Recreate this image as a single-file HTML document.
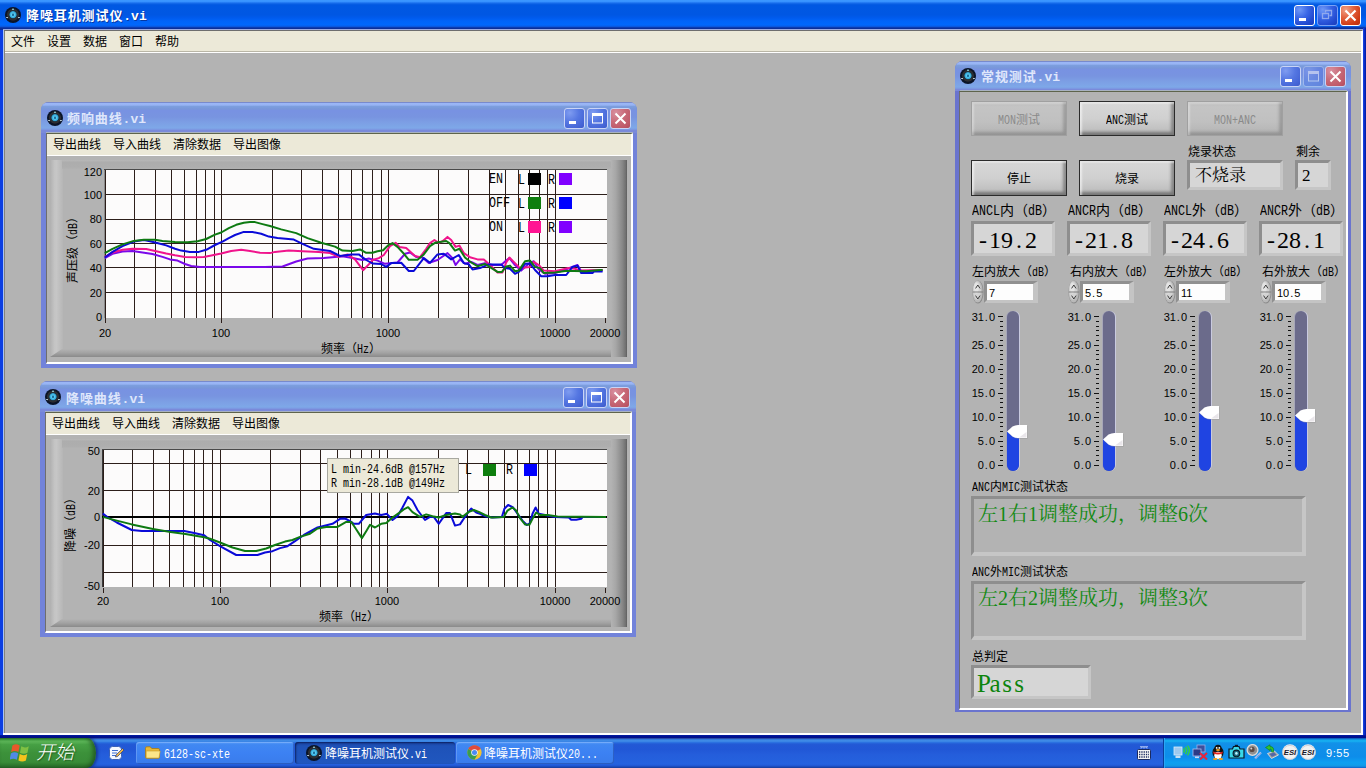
<!DOCTYPE html>
<html lang="zh-CN"><head><meta charset="utf-8"><title>降噪耳机测试仪.vi</title>
<style>
html,body{margin:0;padding:0}
body{width:1366px;height:768px;overflow:hidden;position:relative;background:#b3b3b3;color:#000;
 font:12px/12px "Liberation Sans","Noto Sans CJK SC",sans-serif}
.a,.plot,body div,body span.p{position:absolute}
.t{white-space:nowrap;line-height:12px;height:12px}
.m{display:inline-block;position:static;font-family:"Liberation Mono",monospace;font-size:1em;transform:scaleX(.8333);transform-origin:0 50%;white-space:pre;margin-right:calc(var(--n)*-.1em);line-height:1em}
.f14{font-size:14px;line-height:14px;height:14px}
.f13{font-size:13px;line-height:13px;height:13px}
.n{font:11px/12px "Liberation Sans",sans-serif;white-space:nowrap}
/* main window */
#mt{left:0;top:0;width:1366px;height:30px;background:linear-gradient(to bottom,#3c98ff 0,#3792ff 1.5px,#1a70ee 3px,#0a60e4 4px,#0058e2 5px,#0057e3 15px,#005bee 18px,#0064f8 21px,#0068fc 25px,#0a58de 26.5px,#0b3cb0 27.5px,#0a2e98 28.5px,#0a2e98 30px)}
.ttl{color:#fff;font:bold 13px/14px "Liberation Mono","Noto Sans CJK SC",sans-serif;letter-spacing:.9px;white-space:nowrap;text-shadow:1px 1px 0 rgba(10,20,90,.55)}
.ttl i{font-style:normal;letter-spacing:0}
.ico{width:16px;height:16px;border-radius:50%;background:radial-gradient(circle at 50% 14%,#8cc4cc 0,#8cc4cc .5px,transparent 1.1px),radial-gradient(circle at 13% 66%,#b4c8d0 0,#b4c8d0 .5px,transparent 1.1px),radial-gradient(circle at 87% 66%,#b4c8d0 0,#b4c8d0 .5px,transparent 1.1px),radial-gradient(circle at 50% 48%,#1c6e9c 0,#1c6e9c .9px,#58ccf0 1.5px,#2ea4d8 3.1px,#22323c 3.9px,#302c2e 5.5px,#0a1428 6.3px,#0a1428 100%)}
.cb{width:19px;height:19px;border:1px solid #fff;border-radius:3px;background:radial-gradient(circle at 25% 20%,#6f98f6 0,#3a66e6 40%,#2149cf 75%,#1a3cb8 100%)}
.cb.x{background:radial-gradient(circle at 25% 20%,#f0a085 0,#e2603c 40%,#cf3a14 75%,#b82e10 100%)}
.cb svg{position:absolute;left:0;top:0}
/* inactive child windows */
.w{background:#7283da;border-radius:8px 8px 0 0}
.wt{left:0;top:0;right:0;height:31px;border-radius:8px 8px 0 0;background:linear-gradient(to bottom,#7484c4 0,#7c90d4 1px,#9ab6f6 1.5px,#98b4f4 3px,#7c9ede 4.5px,#7896da 7px,#7892e2 8.5px,#7894e0 15px,#7c9ee4 20px,#7ea8e8 26px,#7c98e2 27.5px,#7a8ada 28.5px,#7a8ada 100%)}
.wt:after{content:"";position:absolute;left:5px;right:4px;bottom:0;height:1px;background:#a8b2c0}
.w .ttl{color:#dfe6fb;text-shadow:none}
.w .cb{border-color:#c9d4f6;background:radial-gradient(circle at 25% 20%,#7f9cf0 0,#5577e2 45%,#4565d6 80%,#3d5bc8 100%)}
.w .cb.x{background:radial-gradient(circle at 25% 20%,#d890a0 0,#c86a78 45%,#be5868 80%,#b04c5c 100%)}
.w .cb.d{opacity:.45}
.wc{background:#b3b3b3;border-style:solid;border-color:#5e644c #fff #fff #6e6e6e;border-width:1px 2px 2px 1px}
.mb{left:0;top:0;right:0;height:21px;background:#ece9d8;border-bottom:1px solid #fff}
.mb span{position:absolute;top:5px;white-space:nowrap}
/* graph panel bevel */
.gp{background:#b3b3b3}
.gp:before{content:"";position:absolute;left:0;top:0;bottom:0;width:13px;background:linear-gradient(to right,#b0b0b0,#c4c4c4 35%,#c6c6c6 50%,#b6b6b6)}
.gp:after{content:"";position:absolute;right:0;top:0;bottom:0;width:16px;background:linear-gradient(to right,#b3b3b3,#a6a6a6 30%,#888 70%,#6e6e6e 94%,#5a5a5a)}
.gpb{left:0;right:0;bottom:0;height:8px;background:linear-gradient(to bottom,#b3b3b3,#a2a2a2 50%,#8a8a8a);clip-path:polygon(12px 0,calc(100% - 15px) 0,100% 100%,0 100%)}
.gpt{left:12px;right:16px;top:0;height:9px;background:linear-gradient(to bottom,#b8b8b8,#adadad 25%,#aeaeae 80%,#b2b2b2)}
.yl{width:40px;text-align:right}
.xl{width:60px;text-align:center}
.tk{width:1px;height:5px;background:#2c1e1a}
.sw{width:13px;height:12px}
/* right panel controls */
.btn{border:1px solid #2b2b2b;box-sizing:border-box;background:linear-gradient(to bottom,#c9c9c9 0,#d6d6d6 12%,#d0d0d0 50%,#c0c0c0 85%,#a8a8a8 100%);box-shadow:inset 2px 2px 2px rgba(255,255,255,.55),inset -3px -3px 3px rgba(70,70,70,.5);text-align:center;line-height:34px}
.btn.dis{border-color:#a0a0a0;color:#8a8a8a;background:linear-gradient(to bottom,#bcbcbc 0,#c4c4c4 15%,#c0c0c0 60%,#b3b3b3 100%);box-shadow:inset 2px 2px 2px rgba(255,255,255,.3),inset -3px -3px 3px rgba(90,90,90,.35)}
.ind{box-sizing:border-box;border-style:solid;border-width:3px;border-color:#8e8e8e #c6c6c6 #c6c6c6 #8e8e8e;background:#d6d6d6}
.ind.g{background:#b3b3b3;border-width:3px 4px 4px 3px}
.big{font:24px/24px "Liberation Serif","Noto Serif CJK SC",serif;white-space:nowrap}
.big b{display:inline-block;width:12px;text-align:center;font-weight:normal}
.gt{font:20px/20px "Liberation Serif","Noto Serif CJK SC",serif;color:#138a13;white-space:nowrap}
.gt b{display:inline-block;width:10px;text-align:center;font-weight:normal}
.sp{width:12px;height:24px}
.inp{box-sizing:border-box;border-style:solid;border-width:3px 5px 3px 3px;border-color:#909090 #c4c4c4 #c4c4c4 #909090;background:#fdfdfd}
.trk{width:12px;border-radius:6px;background:#6b6b8b;box-shadow:1px 0 0 #c9cadf,-1px 0 0 #a6a6b8}
.trk i{position:absolute;left:0;right:0;bottom:0;background:#1f44e2;border-radius:0 0 6px 6px}
.th{width:20px;height:13px;border-radius:7px 3px 3px 7px/6.5px 3px 3px 6.5px;background:linear-gradient(to bottom,#ffffff 0,#fbfbfb 55%,#d8d8d8 100%);box-shadow:0 1px 1px rgba(60,60,60,.35)}
.sl{width:26px;text-align:right}
.n i{display:inline-block;position:static;width:5px;text-align:center;font-style:normal}
/* taskbar */
#tb{left:0;top:738px;width:1366px;height:30px;background:linear-gradient(to bottom,#1f2f86 0,#3165c4 3%,#3682e5 6%,#4490e6 10%,#3883e5 12%,#2b71e0 15%,#2663da 18%,#235bd6 20%,#2258d5 23%,#2157d6 38%,#245ddb 54%,#2562df 86%,#245fdc 89%,#2158d4 92%,#1d4ec0 95%,#1941a5 98%)}
#st{left:0;top:0;width:96px;height:30px;border-radius:0 9px 9px 0/0 15px 15px 0;background:linear-gradient(to bottom,#2f7d2f 0,#4fae4c 7%,#5cb658 12%,#46a044 22%,#3c913a 50%,#398c38 80%,#2f7a2f 92%,#286a28 100%);box-shadow:inset -3px 0 4px rgba(20,60,20,.6),2px 0 3px rgba(10,20,80,.5)}
.tbb{top:4px;height:22px;border-radius:3px;background:linear-gradient(to bottom,#5a9cfa 0,#4088f2 12%,#3c81f3 50%,#3a7ceb 100%);box-shadow:inset 1px 1px 0 rgba(255,255,255,.18),inset -1px -1px 0 rgba(0,0,60,.25);color:#fff}
.tbb.on{background:linear-gradient(to bottom,#1a46a6 0,#1e52b8 20%,#2057bf 100%);box-shadow:inset 1px 1px 2px rgba(0,0,40,.6)}
.tbb .t{color:#fff}
#tray{right:0;top:0;width:203px;height:30px;background:linear-gradient(to bottom,#0c59b9 1%,#139ee9 6%,#18b5f2 10%,#139beb 14%,#1290e8 19%,#0d8dea 63%,#0d9ff1 81%,#0f9eed 88%,#119be9 91%,#1392e2 94%,#137ed7 97%,#095bc9 100%);box-shadow:inset 1px 0 0 #0a3f9a,inset 2px 0 0 #2aa5f5}
</style></head><body>
<div id="mt"></div>
<div class="ico" style="left:5px;top:7px"></div>
<div class="ttl" style="left:26px;top:10px">降噪耳机测试仪<i>.vi</i></div>
<div class="cb" style="left:1294px;top:5px"><svg width="19" height="19"><rect x="4" y="12" width="7" height="3" fill="#fff"/></svg></div>
<div class="cb" style="left:1317px;top:5px;border-color:#7aa2f6"><svg width="19" height="19" fill="none" stroke="#8fa8ee" stroke-width="1.3"><path d="M7.5 6.5V4.5H13.5V9.5H11.5"/><rect x="4.5" y="7.5" width="6" height="5"/></svg></div>
<div class="cb x" style="left:1340px;top:5px"><svg width="19" height="19" stroke="#fff" stroke-width="2.2" stroke-linecap="butt"><path d="M4.5 4.5L14.5 14.5M14.5 4.5L4.5 14.5"/></svg></div>
<div style="left:0;top:30px;width:3px;height:708px;background:#0c3ee2"></div>
<div style="left:3px;top:29px;width:1px;height:706px;background:#a9c4f6"></div>
<div style="left:4px;top:30px;width:1px;height:703px;background:#85837a"></div>
<div style="left:3px;top:29px;width:1360px;height:1px;background:#9aaae2"></div>
<div style="left:4px;top:30px;width:1358px;height:1px;background:#6e6e6e"></div>
<div style="left:1363px;top:28px;width:3px;height:710px;background:linear-gradient(to right,#1a48e8,#0a2cc8 50%,#001a9c)"></div>
<div style="left:1361px;top:31px;width:2px;height:704px;background:#fff"></div>
<div style="left:3px;top:733px;width:1360px;height:2px;background:#fff"></div>
<div style="left:0;top:735px;width:1366px;height:3px;background:linear-gradient(to bottom,#0420a8,#001090 40%,#000e8c)"></div>
<div style="left:5px;top:31px;width:1356px;height:20px;background:#ece9d8"></div>
<div style="left:5px;top:51px;width:1356px;height:1px;background:#b9b6a6"></div>
<div style="left:5px;top:52px;width:1356px;height:1px;background:#fff"></div>
<div class="t" style="left:11px;top:36px">文件</div>
<div class="t" style="left:47px;top:36px">设置</div>
<div class="t" style="left:83px;top:36px">数据</div>
<div class="t" style="left:119px;top:36px">窗口</div>
<div class="t" style="left:155px;top:36px">帮助</div>

<div class="w" style="left:41px;top:102px;width:596px;height:266px"><div class="wt"></div>
<div class="ico" style="left:6px;top:8px"></div>
<div class="ttl" style="left:26px;top:11px">频响曲线<i>.vi</i></div>
<div class="cb" style="left:523px;top:6px"><svg width="19" height="19"><rect x="4" y="12" width="7" height="3" fill="#fff"/></svg></div>
<div class="cb" style="left:546px;top:6px"><svg width="19" height="19" fill="none" stroke="#fff"><rect x="4.5" y="5.5" width="10" height="8.5" stroke-width="1"/><rect x="4" y="4" width="11" height="3" fill="#fff" stroke="none"/></svg></div>
<div class="cb x" style="left:569px;top:6px"><svg width="19" height="19" stroke="#fff" stroke-width="2"><path d="M4.5 4.5L14.5 14.5M14.5 4.5L4.5 14.5"/></svg></div>
<div class="wc" style="left:5px;top:31px;width:584px;height:228px"><div class="mb"><span style="left:6px">导出曲线</span><span style="left:66px">导入曲线</span><span style="left:126px">清除数据</span><span style="left:186px">导出图像</span></div>
<div class="gp" style="left:3px;top:26px;width:577px;height:197px"><div class="gpt"></div><div class="gpb"></div></div></div></div>
<svg class="plot" style="left:104px;top:169px" width="503" height="149" viewBox="0 0 503 149">
<rect width="503" height="149" fill="#fcfbfb"/>
<path d="M1.5 0V149M30.5 0V149M51.5 0V149M67.5 0V149M80.5 0V149M92.5 0V149M101.5 0V149M110.5 0V149M117.5 0V149M168.5 0V149M197.5 0V149M218.5 0V149M234.5 0V149M247.5 0V149M258.5 0V149M268.5 0V149M277.5 0V149M284.5 0V149M334.5 0V149M364.5 0V149M385.5 0V149M401.5 0V149M414.5 0V149M425.5 0V149M435.5 0V149M443.5 0V149M451.5 0V149M0 123.5H503M0 98.5H503M0 74.5H503M0 50.5H503M0 25.5H503" stroke="#2c1e1a" stroke-width="1" fill="none" shape-rendering="crispEdges"/>
<path d="M.5 149V.5" stroke="#8a8a8a" fill="none" shape-rendering="crispEdges"/><path d="M0 .5H503" stroke="#4a4a4a" fill="none" shape-rendering="crispEdges"/>
<path d="M0.8 89.1 L8.5 84.8 L18.5 82.6 L28.5 82.0 L38.5 83.5 L48.5 85.0 L58.5 87.9 L66.0 90.4 L73.5 91.6 L81.0 95.0 L87.2 97.0 L96.0 97.9 L128.5 97.9 L161.0 97.9 L178.5 97.5 L192.2 92.5 L203.5 89.5 L219.8 89.1 L231.0 87.9 L238.5 87.2 L248.5 89.1 L258.5 91.0 L264.8 89.5 L273.5 91.6 L281.0 94.8 L293.5 93.5 L301.0 84.8 L306.0 83.5 L312.2 87.9 L318.5 88.5 L324.8 94.1 L326.0 93.5 L333.5 91.0 L343.5 84.1 L348.5 89.1 L351.6 96.0 L356.0 90.4 L361.0 94.8 L367.2 92.9 L373.5 96.0 L381.0 94.1 L388.5 96.0 L397.2 96.0 L402.2 91.6 L405.4 89.1 L411.0 96.0 L417.2 101.6 L424.8 94.8 L429.8 92.2 L434.8 100.4 L441.0 104.8 L451.0 104.1 L463.5 99.8 L473.5 96.0 L477.2 102.2 L496.0 101.6 L498.6 101.6" stroke="#7a08ea" stroke-width="2" fill="none" stroke-linejoin="round"/>
<path d="M0.8 87.9 L8.5 83.5 L18.5 80.8 L28.5 79.8 L42.2 80.0 L52.2 82.2 L62.2 84.5 L71.0 86.2 L81.0 87.9 L91.0 88.2 L99.8 88.1 L108.5 86.2 L117.2 84.5 L127.2 82.0 L137.2 80.8 L146.0 82.0 L156.0 83.8 L166.0 84.1 L171.0 82.9 L184.8 81.6 L198.5 82.2 L214.8 82.9 L226.0 84.1 L234.8 87.9 L243.5 85.4 L251.0 90.4 L259.1 101.2 L266.0 94.1 L268.5 91.0 L274.8 89.1 L279.8 86.0 L286.0 77.2 L291.6 73.8 L295.4 77.9 L302.2 79.1 L311.0 87.0 L316.0 88.2 L322.2 79.8 L326.0 74.1 L330.4 71.0 L334.8 73.8 L338.5 72.2 L343.5 67.9 L347.2 71.0 L351.6 77.9 L355.4 76.6 L359.8 84.1 L366.0 88.2 L373.5 90.4 L379.8 90.4 L386.0 96.0 L393.5 103.5 L398.5 103.5 L402.2 93.5 L405.4 88.5 L411.0 94.1 L416.0 99.1 L421.0 98.5 L426.0 97.9 L429.8 92.9 L434.8 96.0 L439.8 101.6 L451.0 102.2 L463.5 99.1 L471.0 99.8 L476.0 101.6 L496.0 101.0 L498.6 101.0" stroke="#f0148c" stroke-width="2" fill="none" stroke-linejoin="round"/>
<path d="M0.8 88.5 L8.5 82.9 L18.5 77.2 L29.8 72.5 L39.8 71.0 L46.0 72.2 L52.2 73.8 L62.2 76.4 L71.0 79.8 L77.2 81.6 L86.0 82.9 L94.8 82.9 L102.2 80.8 L111.0 76.0 L118.5 72.6 L124.8 69.1 L131.0 66.0 L139.8 62.9 L148.5 62.9 L157.2 64.8 L164.8 67.6 L173.5 69.1 L189.8 70.6 L198.5 74.8 L209.8 79.8 L226.0 82.0 L236.0 87.0 L247.2 85.4 L254.8 85.4 L262.2 91.0 L268.5 94.5 L277.2 95.0 L282.2 97.9 L287.2 94.1 L297.2 93.8 L304.8 102.0 L309.8 102.0 L319.8 89.1 L326.0 93.8 L333.5 85.4 L339.8 84.8 L347.2 90.4 L354.8 86.0 L359.8 94.1 L364.8 95.4 L368.5 100.4 L376.0 99.1 L384.8 95.4 L397.2 95.4 L401.0 99.1 L406.0 99.8 L411.0 104.8 L414.8 102.9 L421.0 94.8 L426.0 94.5 L431.0 101.0 L437.2 107.2 L443.5 107.2 L451.0 106.0 L462.2 106.0 L468.5 97.9 L473.5 96.6 L477.2 104.1 L488.5 104.1 L490.0 102.6 L498.6 102.6" stroke="#0a0ad8" stroke-width="2" fill="none" stroke-linejoin="round"/>
<path d="M0.8 84.1 L8.5 79.8 L18.5 75.4 L29.8 71.9 L39.8 70.8 L51.0 70.8 L58.5 71.9 L71.0 73.1 L83.5 73.2 L93.5 72.2 L102.2 70.0 L111.0 65.6 L117.2 63.5 L124.8 59.1 L132.2 55.8 L139.8 53.8 L146.0 52.9 L151.0 53.1 L158.5 55.1 L166.0 57.0 L177.2 60.4 L192.2 64.1 L203.5 69.1 L217.2 73.8 L231.0 77.6 L238.5 81.6 L248.5 82.0 L256.0 80.4 L262.2 83.8 L268.5 83.8 L273.5 82.2 L279.1 81.2 L284.8 75.8 L288.5 74.1 L293.5 77.9 L299.9 84.8 L304.8 90.8 L313.5 90.8 L319.8 85.4 L326.0 77.2 L331.0 73.8 L342.2 72.0 L345.4 74.1 L351.0 81.6 L355.4 79.8 L361.0 88.5 L367.2 93.5 L373.5 97.2 L381.0 95.0 L387.2 98.8 L393.5 102.9 L397.9 102.9 L402.2 97.5 L406.0 96.6 L411.0 102.2 L414.8 101.6 L421.0 92.2 L426.0 91.6 L431.0 97.9 L436.0 99.1 L439.8 104.1 L451.0 103.5 L461.0 102.0 L469.8 102.0 L482.2 102.2 L496.0 101.0 L498.6 101.0" stroke="#0e7a12" stroke-width="2" fill="none" stroke-linejoin="round"/>

</svg>
<div class="n yl" style="left:62px;top:166px">120</div>
<div class="n yl" style="left:62px;top:189px">100</div>
<div class="n yl" style="left:62px;top:213px">80</div>
<div class="n yl" style="left:62px;top:238px">60</div>
<div class="n yl" style="left:62px;top:262px">40</div>
<div class="n yl" style="left:62px;top:287px">20</div>
<div class="n yl" style="left:62px;top:311px">0</div>
<div class="tk" style="left:105px;top:318px"></div><div class="tk" style="left:221px;top:318px"></div><div class="tk" style="left:388px;top:318px"></div><div class="tk" style="left:555px;top:318px"></div><div class="tk" style="left:605px;top:318px"></div>
<div class="n xl" style="left:75px;top:327px">20</div>
<div class="n xl" style="left:191px;top:327px">100</div>
<div class="n xl" style="left:358px;top:327px">1000</div>
<div class="n xl" style="left:525px;top:327px">10000</div>
<div class="n xl" style="left:575px;top:327px">20000</div>
<div class="t" style="left:321px;top:343px">频率（<span class="m" style="--n:2">Hz</span>）</div>
<div class="t" style="left:37px;top:241px;width:72px;text-align:center;transform:rotate(-90deg)">声压级（<span class="m" style="--n:2">dB</span>）</div>
<div class="t f14" style="left:489px;top:171px"><span class="m" style="--n:2">EN</span></div>
<div class="t f14" style="left:489px;top:195px"><span class="m" style="--n:3">OFF</span></div>
<div class="t f14" style="left:489px;top:219px"><span class="m" style="--n:2">ON</span></div>
<div class="t f14" style="left:518px;top:172px"><span class="m" style="--n:1">L</span></div><div class="sw" style="left:528px;top:173px;background:#000"></div><div class="t f14" style="left:548px;top:172px"><span class="m" style="--n:1">R</span></div><div class="sw" style="left:559px;top:173px;background:#8000ff"></div>
<div class="t f14" style="left:518px;top:196px"><span class="m" style="--n:1">L</span></div><div class="sw" style="left:528px;top:197px;background:#0e7e0e"></div><div class="t f14" style="left:548px;top:196px"><span class="m" style="--n:1">R</span></div><div class="sw" style="left:559px;top:197px;background:#0000ff"></div>
<div class="t f14" style="left:518px;top:220px"><span class="m" style="--n:1">L</span></div><div class="sw" style="left:528px;top:221px;background:#ff1493"></div><div class="t f14" style="left:548px;top:220px"><span class="m" style="--n:1">R</span></div><div class="sw" style="left:559px;top:221px;background:#8000ff"></div>

<div class="w" style="left:40px;top:381px;width:596px;height:256px"><div class="wt"></div>
<div class="ico" style="left:5px;top:8px"></div>
<div class="ttl" style="left:26px;top:12px">降噪曲线<i>.vi</i></div>
<div class="cb" style="left:523px;top:6px"><svg width="19" height="19"><rect x="4" y="12" width="7" height="3" fill="#fff"/></svg></div>
<div class="cb" style="left:546px;top:6px"><svg width="19" height="19" fill="none" stroke="#fff"><rect x="4.5" y="5.5" width="10" height="8.5" stroke-width="1"/><rect x="4" y="4" width="11" height="3" fill="#fff" stroke="none"/></svg></div>
<div class="cb x" style="left:569px;top:6px"><svg width="19" height="19" stroke="#fff" stroke-width="2"><path d="M4.5 4.5L14.5 14.5M14.5 4.5L4.5 14.5"/></svg></div>
<div class="wc" style="left:5px;top:31px;width:584px;height:218px"><div class="mb"><span style="left:6px">导出曲线</span><span style="left:66px">导入曲线</span><span style="left:126px">清除数据</span><span style="left:186px">导出图像</span></div>
<div class="gp" style="left:4px;top:26px;width:577px;height:188px"><div class="gpt"></div><div class="gpb"></div></div></div></div>
<svg class="plot" style="left:102px;top:449px" width="505" height="138" viewBox="0 0 505 138">
<rect width="505" height="138" fill="#fcfbfb"/>
<path d="M1.5 0V138M30.5 0V138M51.5 0V138M67.5 0V138M81.5 0V138M92.5 0V138M101.5 0V138M110.5 0V138M118.5 0V138M168.5 0V138M198.5 0V138M218.5 0V138M235.5 0V138M248.5 0V138M259.5 0V138M269.5 0V138M277.5 0V138M285.5 0V138M336.5 0V138M365.5 0V138M386.5 0V138M402.5 0V138M415.5 0V138M427.5 0V138M436.5 0V138M445.5 0V138M453.5 0V138M0 14.5H505M0 41.5H505M0 96.5H505M0 123.5H505" stroke="#2c1e1a" stroke-width="1" fill="none" shape-rendering="crispEdges"/>
<path d="M.5 138V.5" stroke="#3a3a3a" fill="none" shape-rendering="crispEdges"/><path d="M0 .5H505" stroke="#4a4a4a" fill="none" shape-rendering="crispEdges"/>
<rect x="0" y="67.0" width="505" height="2" fill="#000"/>
<path d="M0.8 64.5 L6.0 68.5 L14.8 73.5 L29.8 81.0 L39.8 82.0 L61.0 82.0 L82.2 82.0 L92.2 84.1 L102.2 86.2 L108.0 91.0 L118.0 97.2 L134.2 106.0 L155.5 106.0 L163.0 103.5 L170.5 102.2 L178.0 99.1 L185.5 97.2 L193.0 92.2 L201.8 86.0 L215.5 78.5 L230.5 74.8 L238.0 69.8 L243.0 69.5 L248.0 72.2 L251.8 74.8 L256.8 74.8 L264.2 66.0 L273.0 64.5 L279.2 66.0 L284.9 64.8 L290.5 71.0 L295.5 67.2 L300.5 58.5 L306.1 47.9 L310.5 51.6 L315.5 61.0 L323.0 71.0 L328.0 67.9 L331.8 67.9 L336.8 74.8 L344.2 64.1 L348.0 64.1 L353.0 76.6 L358.0 75.4 L364.2 66.0 L369.2 59.5 L374.2 63.5 L378.0 64.8 L383.0 67.2 L390.5 68.5 L399.9 67.9 L402.4 59.8 L406.1 56.0 L411.1 58.5 L415.5 64.8 L420.5 71.6 L424.9 76.0 L428.0 74.1 L430.5 64.8 L433.6 58.5 L436.8 64.8 L443.0 66.0 L453.0 67.9 L466.8 68.5 L469.2 70.8 L474.2 70.8 L479.2 69.8 L480.5 68.1 L504.0 68.1" stroke="#0a0ad8" stroke-width="2" fill="none" stroke-linejoin="round"/>
<path d="M0.8 67.9 L14.8 71.6 L29.8 75.4 L51.0 80.0 L68.5 82.9 L83.5 85.0 L102.2 88.2 L108.0 89.8 L118.0 93.5 L130.5 98.5 L143.0 102.0 L154.2 102.0 L164.2 99.5 L173.0 96.0 L183.0 92.6 L190.5 91.0 L198.0 87.9 L208.0 84.8 L215.5 79.5 L224.2 77.9 L235.5 77.9 L244.2 72.9 L249.2 72.9 L253.0 78.5 L259.9 89.1 L264.2 82.2 L268.0 75.8 L273.0 78.5 L279.2 74.8 L284.2 74.1 L290.5 68.5 L296.8 64.1 L301.8 60.4 L306.1 58.2 L310.5 63.2 L318.0 67.9 L324.2 65.4 L330.5 67.2 L336.8 68.5 L344.2 66.0 L353.0 64.5 L358.0 65.4 L360.5 67.9 L366.8 62.9 L371.8 61.0 L376.8 62.9 L383.0 66.0 L389.2 68.5 L401.8 67.9 L405.5 61.6 L410.5 58.5 L414.2 61.6 L418.0 69.1 L423.0 75.4 L427.4 75.8 L430.5 69.8 L434.2 63.5 L438.0 66.0 L445.5 66.0 L455.5 67.5 L504.0 68.1" stroke="#0e7a12" stroke-width="2" fill="none" stroke-linejoin="round"/>

</svg>
<div class="n yl" style="left:60px;top:445px">50</div>
<div class="n yl" style="left:60px;top:485px">20</div>
<div class="n yl" style="left:60px;top:511px">0</div>
<div class="n yl" style="left:60px;top:539px">-20</div>
<div class="n yl" style="left:60px;top:580px">-50</div>
<div class="tk" style="left:103px;top:588px"></div><div class="tk" style="left:220px;top:588px"></div><div class="tk" style="left:387px;top:588px"></div><div class="tk" style="left:555px;top:588px"></div><div class="tk" style="left:605px;top:588px"></div>
<div class="n xl" style="left:73px;top:595px">20</div>
<div class="n xl" style="left:190px;top:595px">100</div>
<div class="n xl" style="left:357px;top:595px">1000</div>
<div class="n xl" style="left:525px;top:595px">10000</div>
<div class="n xl" style="left:575px;top:595px">20000</div>
<div class="t" style="left:319px;top:611px">频率（<span class="m" style="--n:2">Hz</span>）</div>
<div class="t" style="left:41px;top:516px;width:60px;text-align:center;transform:rotate(-90deg)">降噪（<span class="m" style="--n:2">dB</span>）</div>
<div style="left:327px;top:458px;width:130px;height:33px;background:#ece9d8;border:1px solid #a8a8a0"></div>
<div class="t" style="left:331px;top:463px"><span class="m" style="--n:19">L min-24.6dB @157Hz</span></div>
<div class="t" style="left:331px;top:477px"><span class="m" style="--n:19">R min-28.1dB @149Hz</span></div>
<div class="t f14" style="left:465px;top:462px"><span class="m" style="--n:1">L</span></div><div class="sw" style="left:483px;top:464px;background:#0e7e0e"></div><div class="t f14" style="left:506px;top:462px"><span class="m" style="--n:1">R</span></div><div class="sw" style="left:524px;top:464px;background:#0000ff"></div>

<div class="w" style="left:955px;top:61px;width:396px;height:651px;background:#6a74ce"><div class="wt" style="height:30px"></div>
<div class="ico" style="left:5px;top:7px"></div>
<div class="ttl" style="left:26px;top:10px">常规测试<i>.vi</i></div>
<div class="cb" style="left:325px;top:5px"><svg width="19" height="19"><rect x="4" y="12" width="7" height="3" fill="#fff"/></svg></div>
<div class="cb d" style="left:348px;top:5px"><svg width="19" height="19" fill="none" stroke="#fff"><rect x="4.5" y="5.5" width="10" height="8.5"/><rect x="4" y="4" width="11" height="3" fill="#fff" stroke="none"/></svg></div>
<div class="cb x" style="left:370px;top:5px"><svg width="19" height="19" stroke="#fff" stroke-width="2"><path d="M4.5 4.5L14.5 14.5M14.5 4.5L4.5 14.5"/></svg></div>
<div class="wc" style="left:4px;top:30px;width:386px;height:616px"></div></div>
<div class="btn dis" style="left:971px;top:101px;width:96px;height:35px;line-height:36px"><span class="m" style="--n:3">MON</span>测试</div>
<div class="btn" style="left:1079px;top:101px;width:96px;height:35px;line-height:36px"><span class="m" style="--n:3">ANC</span>测试</div>
<div class="btn dis" style="left:1187px;top:101px;width:96px;height:35px;line-height:36px"><span class="m" style="--n:7">MON+ANC</span></div>
<div class="btn" style="left:971px;top:160px;width:96px;height:36px;line-height:37px">停止</div>
<div class="btn" style="left:1079px;top:160px;width:96px;height:36px;line-height:37px">烧录</div>
<div class="t" style="left:1188px;top:146px">烧录状态</div>
<div class="ind" style="left:1187px;top:160px;width:96px;height:30px"></div>
<div class="a" style="left:1195px;top:167px;font:17px/18px 'Liberation Serif','Noto Serif CJK SC',serif;white-space:nowrap">不烧录</div>
<div class="t" style="left:1296px;top:146px">剩余</div>
<div class="ind" style="left:1295px;top:160px;width:36px;height:30px"></div>
<div class="a" style="left:1302px;top:167px;font:17px/18px 'Liberation Serif',serif">2</div>
<div class="t f14" style="left:972px;top:203px"><span class="m" style="--n:4">ANCL</span>内（<span class="m" style="--n:2">dB</span>）</div>
<div class="ind" style="left:971px;top:221px;width:84px;height:35px"></div>
<div class="big" style="left:977px;top:228px"><b>-</b><b>1</b><b>9</b><b>.</b><b>2</b></div>
<div class="t f14" style="left:1068px;top:203px"><span class="m" style="--n:4">ANCR</span>内（<span class="m" style="--n:2">dB</span>）</div>
<div class="ind" style="left:1067px;top:221px;width:84px;height:35px"></div>
<div class="big" style="left:1073px;top:228px"><b>-</b><b>2</b><b>1</b><b>.</b><b>8</b></div>
<div class="t f14" style="left:1164px;top:203px"><span class="m" style="--n:4">ANCL</span>外（<span class="m" style="--n:2">dB</span>）</div>
<div class="ind" style="left:1163px;top:221px;width:84px;height:35px"></div>
<div class="big" style="left:1169px;top:228px"><b>-</b><b>2</b><b>4</b><b>.</b><b>6</b></div>
<div class="t f14" style="left:1260px;top:203px"><span class="m" style="--n:4">ANCR</span>外（<span class="m" style="--n:2">dB</span>）</div>
<div class="ind" style="left:1259px;top:221px;width:84px;height:35px"></div>
<div class="big" style="left:1265px;top:228px"><b>-</b><b>2</b><b>8</b><b>.</b><b>1</b></div>
<div class="t" style="left:972px;top:266px">左内放大（<span class="m" style="--n:2">dB</span>）</div>
<svg class="plot sp" style="left:972px;top:280px" width="12" height="24" viewBox="0 0 12 24"><ellipse cx="6" cy="12" rx="5.6" ry="11.6" fill="#8a8a8a"/><ellipse cx="5.6" cy="11.6" rx="5.1" ry="11" fill="#b9b9b9"/><ellipse cx="5" cy="10.5" rx="3.9" ry="9.3" fill="#d3d3d3"/><ellipse cx="4.4" cy="8" rx="2.4" ry="5.5" fill="#e4e4e4"/><path d="M.8 12H11" stroke="#7c7c7c" stroke-width="1"/><path d="M3.6 8.4L5.8 5L8 8.4M3.6 15.6L5.8 19L8 15.6" stroke="#3c3c3c" stroke-width="1" fill="none"/></svg>
<div class="inp" style="left:984px;top:281px;width:54px;height:22px"></div>
<div class="n" style="left:989px;top:287px">7</div>
<div class="trk" style="left:1007px;top:311px;height:160px"><i style="height:38.8px"></i></div>
<svg class="plot" style="left:1007px;top:425.3px" width="21" height="14" viewBox="0 0 21 14"><path d="M.3 7L5.5 2Q8.5 .2 11.5 .2H20.2V13.2H11.5Q8.5 13.2 5.5 11.6Z" fill="#9a9a9a" opacity=".45" transform="translate(.5 .7)"/><path d="M0 6.5L5.5 1.6Q8.5 0 11.5 0H20V13H11.5Q8.5 13 5.5 11.4Z" fill="#fff"/><path d="M12 12.5H19.5V7Z" fill="#e9e6ea"/></svg>
<svg class="plot" style="left:972px;top:0" width="32" height="480" ><path d="M26 465.5H31M28 460.5H31M28 455.5H31M28 450.5H31M28 446.5H31M26 441.5H31M28 436.5H31M28 431.5H31M28 426.5H31M28 422.5H31M26 417.5H31M28 412.5H31M28 407.5H31M28 402.5H31M28 398.5H31M26 393.5H31M28 388.5H31M28 383.5H31M28 378.5H31M28 374.5H31M26 369.5H31M28 364.5H31M28 359.5H31M28 354.5H31M28 350.5H31M26 345.5H31M28 340.5H31M28 335.5H31M28 330.5H31M28 326.5H31M28 321.5H31M26 316.5H31" stroke="#111" stroke-width="1" shape-rendering="crispEdges"/></svg>
<div class="n sl" style="left:969px;top:311px">31<i>.</i>0</div>
<div class="n sl" style="left:969px;top:339px">25<i>.</i>0</div>
<div class="n sl" style="left:969px;top:363px">20<i>.</i>0</div>
<div class="n sl" style="left:969px;top:387px">15<i>.</i>0</div>
<div class="n sl" style="left:969px;top:411px">10<i>.</i>0</div>
<div class="n sl" style="left:969px;top:435px">5<i>.</i>0</div>
<div class="n sl" style="left:969px;top:459px">0<i>.</i>0</div>
<div class="t" style="left:1070px;top:266px">右内放大（<span class="m" style="--n:2">dB</span>）</div>
<svg class="plot sp" style="left:1068px;top:280px" width="12" height="24" viewBox="0 0 12 24"><ellipse cx="6" cy="12" rx="5.6" ry="11.6" fill="#8a8a8a"/><ellipse cx="5.6" cy="11.6" rx="5.1" ry="11" fill="#b9b9b9"/><ellipse cx="5" cy="10.5" rx="3.9" ry="9.3" fill="#d3d3d3"/><ellipse cx="4.4" cy="8" rx="2.4" ry="5.5" fill="#e4e4e4"/><path d="M.8 12H11" stroke="#7c7c7c" stroke-width="1"/><path d="M3.6 8.4L5.8 5L8 8.4M3.6 15.6L5.8 19L8 15.6" stroke="#3c3c3c" stroke-width="1" fill="none"/></svg>
<div class="inp" style="left:1080px;top:281px;width:54px;height:22px"></div>
<div class="n" style="left:1085px;top:287px">5<i>.</i>5</div>
<div class="trk" style="left:1103px;top:311px;height:160px"><i style="height:31.6px"></i></div>
<svg class="plot" style="left:1103px;top:432.5px" width="21" height="14" viewBox="0 0 21 14"><path d="M.3 7L5.5 2Q8.5 .2 11.5 .2H20.2V13.2H11.5Q8.5 13.2 5.5 11.6Z" fill="#9a9a9a" opacity=".45" transform="translate(.5 .7)"/><path d="M0 6.5L5.5 1.6Q8.5 0 11.5 0H20V13H11.5Q8.5 13 5.5 11.4Z" fill="#fff"/><path d="M12 12.5H19.5V7Z" fill="#e9e6ea"/></svg>
<svg class="plot" style="left:1068px;top:0" width="32" height="480" ><path d="M26 465.5H31M28 460.5H31M28 455.5H31M28 450.5H31M28 446.5H31M26 441.5H31M28 436.5H31M28 431.5H31M28 426.5H31M28 422.5H31M26 417.5H31M28 412.5H31M28 407.5H31M28 402.5H31M28 398.5H31M26 393.5H31M28 388.5H31M28 383.5H31M28 378.5H31M28 374.5H31M26 369.5H31M28 364.5H31M28 359.5H31M28 354.5H31M28 350.5H31M26 345.5H31M28 340.5H31M28 335.5H31M28 330.5H31M28 326.5H31M28 321.5H31M26 316.5H31" stroke="#111" stroke-width="1" shape-rendering="crispEdges"/></svg>
<div class="n sl" style="left:1065px;top:311px">31<i>.</i>0</div>
<div class="n sl" style="left:1065px;top:339px">25<i>.</i>0</div>
<div class="n sl" style="left:1065px;top:363px">20<i>.</i>0</div>
<div class="n sl" style="left:1065px;top:387px">15<i>.</i>0</div>
<div class="n sl" style="left:1065px;top:411px">10<i>.</i>0</div>
<div class="n sl" style="left:1065px;top:435px">5<i>.</i>0</div>
<div class="n sl" style="left:1065px;top:459px">0<i>.</i>0</div>
<div class="t" style="left:1164px;top:266px">左外放大（<span class="m" style="--n:2">dB</span>）</div>
<svg class="plot sp" style="left:1164px;top:280px" width="12" height="24" viewBox="0 0 12 24"><ellipse cx="6" cy="12" rx="5.6" ry="11.6" fill="#8a8a8a"/><ellipse cx="5.6" cy="11.6" rx="5.1" ry="11" fill="#b9b9b9"/><ellipse cx="5" cy="10.5" rx="3.9" ry="9.3" fill="#d3d3d3"/><ellipse cx="4.4" cy="8" rx="2.4" ry="5.5" fill="#e4e4e4"/><path d="M.8 12H11" stroke="#7c7c7c" stroke-width="1"/><path d="M3.6 8.4L5.8 5L8 8.4M3.6 15.6L5.8 19L8 15.6" stroke="#3c3c3c" stroke-width="1" fill="none"/></svg>
<div class="inp" style="left:1176px;top:281px;width:54px;height:22px"></div>
<div class="n" style="left:1181px;top:287px">11</div>
<div class="trk" style="left:1199px;top:311px;height:160px"><i style="height:58.0px"></i></div>
<svg class="plot" style="left:1199px;top:406.1px" width="21" height="14" viewBox="0 0 21 14"><path d="M.3 7L5.5 2Q8.5 .2 11.5 .2H20.2V13.2H11.5Q8.5 13.2 5.5 11.6Z" fill="#9a9a9a" opacity=".45" transform="translate(.5 .7)"/><path d="M0 6.5L5.5 1.6Q8.5 0 11.5 0H20V13H11.5Q8.5 13 5.5 11.4Z" fill="#fff"/><path d="M12 12.5H19.5V7Z" fill="#e9e6ea"/></svg>
<svg class="plot" style="left:1164px;top:0" width="32" height="480" ><path d="M26 465.5H31M28 460.5H31M28 455.5H31M28 450.5H31M28 446.5H31M26 441.5H31M28 436.5H31M28 431.5H31M28 426.5H31M28 422.5H31M26 417.5H31M28 412.5H31M28 407.5H31M28 402.5H31M28 398.5H31M26 393.5H31M28 388.5H31M28 383.5H31M28 378.5H31M28 374.5H31M26 369.5H31M28 364.5H31M28 359.5H31M28 354.5H31M28 350.5H31M26 345.5H31M28 340.5H31M28 335.5H31M28 330.5H31M28 326.5H31M28 321.5H31M26 316.5H31" stroke="#111" stroke-width="1" shape-rendering="crispEdges"/></svg>
<div class="n sl" style="left:1161px;top:311px">31<i>.</i>0</div>
<div class="n sl" style="left:1161px;top:339px">25<i>.</i>0</div>
<div class="n sl" style="left:1161px;top:363px">20<i>.</i>0</div>
<div class="n sl" style="left:1161px;top:387px">15<i>.</i>0</div>
<div class="n sl" style="left:1161px;top:411px">10<i>.</i>0</div>
<div class="n sl" style="left:1161px;top:435px">5<i>.</i>0</div>
<div class="n sl" style="left:1161px;top:459px">0<i>.</i>0</div>
<div class="t" style="left:1262px;top:266px">右外放大（<span class="m" style="--n:2">dB</span>）</div>
<svg class="plot sp" style="left:1260px;top:280px" width="12" height="24" viewBox="0 0 12 24"><ellipse cx="6" cy="12" rx="5.6" ry="11.6" fill="#8a8a8a"/><ellipse cx="5.6" cy="11.6" rx="5.1" ry="11" fill="#b9b9b9"/><ellipse cx="5" cy="10.5" rx="3.9" ry="9.3" fill="#d3d3d3"/><ellipse cx="4.4" cy="8" rx="2.4" ry="5.5" fill="#e4e4e4"/><path d="M.8 12H11" stroke="#7c7c7c" stroke-width="1"/><path d="M3.6 8.4L5.8 5L8 8.4M3.6 15.6L5.8 19L8 15.6" stroke="#3c3c3c" stroke-width="1" fill="none"/></svg>
<div class="inp" style="left:1272px;top:281px;width:54px;height:22px"></div>
<div class="n" style="left:1277px;top:287px">10<i>.</i>5</div>
<div class="trk" style="left:1295px;top:311px;height:160px"><i style="height:55.6px"></i></div>
<svg class="plot" style="left:1295px;top:408.5px" width="21" height="14" viewBox="0 0 21 14"><path d="M.3 7L5.5 2Q8.5 .2 11.5 .2H20.2V13.2H11.5Q8.5 13.2 5.5 11.6Z" fill="#9a9a9a" opacity=".45" transform="translate(.5 .7)"/><path d="M0 6.5L5.5 1.6Q8.5 0 11.5 0H20V13H11.5Q8.5 13 5.5 11.4Z" fill="#fff"/><path d="M12 12.5H19.5V7Z" fill="#e9e6ea"/></svg>
<svg class="plot" style="left:1260px;top:0" width="32" height="480" ><path d="M26 465.5H31M28 460.5H31M28 455.5H31M28 450.5H31M28 446.5H31M26 441.5H31M28 436.5H31M28 431.5H31M28 426.5H31M28 422.5H31M26 417.5H31M28 412.5H31M28 407.5H31M28 402.5H31M28 398.5H31M26 393.5H31M28 388.5H31M28 383.5H31M28 378.5H31M28 374.5H31M26 369.5H31M28 364.5H31M28 359.5H31M28 354.5H31M28 350.5H31M26 345.5H31M28 340.5H31M28 335.5H31M28 330.5H31M28 326.5H31M28 321.5H31M26 316.5H31" stroke="#111" stroke-width="1" shape-rendering="crispEdges"/></svg>
<div class="n sl" style="left:1257px;top:311px">31<i>.</i>0</div>
<div class="n sl" style="left:1257px;top:339px">25<i>.</i>0</div>
<div class="n sl" style="left:1257px;top:363px">20<i>.</i>0</div>
<div class="n sl" style="left:1257px;top:387px">15<i>.</i>0</div>
<div class="n sl" style="left:1257px;top:411px">10<i>.</i>0</div>
<div class="n sl" style="left:1257px;top:435px">5<i>.</i>0</div>
<div class="n sl" style="left:1257px;top:459px">0<i>.</i>0</div>
<div class="t" style="left:972px;top:481px"><span class="m" style="--n:3">ANC</span>内<span class="m" style="--n:3">MIC</span>测试状态</div>
<div class="ind g" style="left:971px;top:496px;width:335px;height:60px"></div>
<div class="gt" style="left:978px;top:504px">左<b>1</b>右<b>1</b>调整成功，调整<b>6</b>次</div>
<div class="t" style="left:972px;top:566px"><span class="m" style="--n:3">ANC</span>外<span class="m" style="--n:3">MIC</span>测试状态</div>
<div class="ind g" style="left:971px;top:581px;width:335px;height:59px"></div>
<div class="gt" style="left:978px;top:588px">左<b>2</b>右<b>2</b>调整成功，调整<b>3</b>次</div>
<div class="t" style="left:972px;top:651px">总判定</div>
<div class="ind" style="left:971px;top:665px;width:120px;height:34px"></div>
<div class="big" style="left:977px;top:672px;color:#0c840c;font-size:25px"><b>P</b><b>a</b><b>s</b><b>s</b></div>

<div id="tb">
<div id="tray"></div>
<div id="st"></div>
<svg class="plot" style="left:10px;top:4px" width="21" height="20" viewBox="0 0 19 18"><path d="M2.2 3.2C4.5 1.6 6.6 1.8 8.8 3.2L7.6 9C5.4 7.7 3.3 7.6 1 9Z" fill="#e8592a"/><path d="M10.2 3.9C12.5 5.2 14.6 5.2 17 3.8L15.8 9.6C13.5 11 11.3 10.9 9 9.6Z" fill="#7fc043"/><path d="M.8 10.3C3.1 8.9 5.2 9 7.4 10.3L6.2 16C4 14.7 1.9 14.7-.4 16Z" fill="#4f8ae6"/><path d="M8.8 10.9C11.1 12.2 13.2 12.2 15.6 10.8L14.4 16.6C12.1 18 9.9 17.9 7.6 16.6Z" fill="#f5c31c"/></svg>
<div class="a" style="left:36px;top:4px;font:italic 300 19px/22px 'Liberation Sans','Noto Sans CJK SC',sans-serif;color:#fff;white-space:nowrap;text-shadow:1px 1px 1px rgba(0,40,0,.5);letter-spacing:0">开始</div>
<svg class="plot" style="left:108px;top:7px" width="18" height="16" viewBox="0 0 18 16"><rect x="1.5" y="1.5" width="12" height="13" rx="3" fill="#f4f8ff" stroke="#3a62b8"/><path d="M4 5.5H10M4 8H9M4 10.5H8" stroke="#3f6fd0" stroke-width="1.2"/><path d="M8 10L14.5 3.5L16 5L9.5 11.5L7.5 12Z" fill="#e9b44a" stroke="#2a3c78" stroke-width=".7"/></svg>
<div class="tbb" style="left:136px;width:158px"><svg class="plot" style="left:9px;top:4px" width="16" height="13" viewBox="0 0 16 13"><path d="M.5 2.2Q.5 .8 1.8 .8H5.2L6.8 2.5H13.2Q14.5 2.5 14.5 3.8V11Q14.5 12.2 13.2 12.2H1.8Q.5 12.2 .5 11Z" fill="#e8b838" stroke="#a87a14" stroke-width=".8"/><path d="M1.2 5H15.2L14 12H1.2Z" fill="#fbe58a" stroke="#c89a28" stroke-width=".6"/></svg><div class="t" style="left:28px;top:6px"><span class="m" style="--n:11">6128-sc-xte</span></div></div>
<div class="tbb on" style="left:295px;width:160px"><div class="ico" style="left:11px;top:3px"></div><div class="t" style="left:30px;top:6px">降噪耳机测试仪<span class="m" style="--n:3">.vi</span></div></div>
<div class="tbb" style="left:456px;width:158px"><svg class="plot" style="left:11px;top:3px" width="15" height="15" viewBox="0 0 16 16"><circle cx="8" cy="8" r="7.6" fill="#f1c232"/><path d="M8 8L1.4 4.2A7.6 7.6 0 0 1 14.6 4.2Z" fill="#dd4b3e"/><path d="M8 8L1.4 4.2A7.6 7.6 0 0 0 8 15.6L11.3 9.9Z" fill="#3a9c4f"/><circle cx="8" cy="8" r="3.5" fill="#f4f4f4"/><circle cx="8" cy="8" r="2.7" fill="#4a8af4"/></svg><div class="t" style="left:28px;top:6px">降噪耳机测试仪<span class="m" style="--n:5">20...</span></div></div>
<svg class="plot" style="left:1137px;top:8px" width="14" height="14" viewBox="0 0 14 14"><path d="M3 .8H11M4 2.5L5 1.2M7 2.5V1.2M10 2.5L9 1.2" stroke="#dfe8ff" stroke-width=".8"/><rect x=".5" y="3.5" width="13" height="10" rx="1" fill="#f4f4f4" stroke="#1b2a60"/><path d="M2 6H12M2 8.5H12M2 11H12" stroke="#1b2a60" stroke-width="1.4" stroke-dasharray="1.3 1"/></svg>
<svg class="plot" style="left:1173px;top:6px" width="17" height="16" viewBox="0 0 17 16"><rect x="1" y="3" width="8" height="8" fill="#9ec9ee" stroke="#d8ecfb" stroke-width=".8"/><rect x="2.5" y="11.5" width="5" height="2.5" fill="#c9dff2"/><path d="M10.5 4.5Q12.2 6.5 10.5 8.5M12.5 3Q15 6.5 12.5 10M14.6 1.6Q18 6.5 14.6 11.4" stroke="#38d23a" stroke-width="1.4" fill="none"/></svg>
<svg class="plot" style="left:1192px;top:6px" width="16" height="16" viewBox="0 0 16 16"><rect x="5" y="1" width="8" height="7" fill="#3d4f9c" stroke="#9fb0e8" stroke-width=".8"/><rect x="1" y="5" width="8" height="7" fill="#2c3a86" stroke="#aebcf0" stroke-width=".8"/><rect x="3" y="12.5" width="4" height="1.6" fill="#c9d4f4"/><path d="M8 9L15 15.5M15 9L8 15.5" stroke="#e8243c" stroke-width="2"/></svg>
<svg class="plot" style="left:1210px;top:6px" width="16" height="16" viewBox="0 0 16 16"><ellipse cx="8" cy="8.5" rx="5.6" ry="6.2" fill="#141414"/><ellipse cx="8" cy="4.6" rx="3.6" ry="3.8" fill="#141414"/><ellipse cx="8" cy="11.3" rx="3.7" ry="3.6" fill="#fff"/><circle cx="6.7" cy="3.9" r=".9" fill="#fff"/><circle cx="9.3" cy="3.9" r=".9" fill="#fff"/><ellipse cx="8" cy="6" rx="2" ry=".9" fill="#f7a21b"/><path d="M3.2 7.4Q8 9.8 12.8 7.4L12.5 9.6Q8 11.6 3.5 9.6Z" fill="#e5261f"/><ellipse cx="5.2" cy="14.9" rx="2.3" ry="1" fill="#f7a21b"/><ellipse cx="10.8" cy="14.9" rx="2.3" ry="1" fill="#f7a21b"/></svg>
<svg class="plot" style="left:1228px;top:6px" width="17" height="16" viewBox="0 0 17 16"><path d="M1 5H4.5L5.5 2.5H11L12 5H16V14H1Z" fill="#38d8e8" stroke="#0a1a2a" stroke-width="1.2"/><circle cx="8.4" cy="9.4" r="3.3" fill="#1a6a80" stroke="#0a1a2a" stroke-width="1.1"/><circle cx="8.4" cy="9.4" r="1.3" fill="#bff4ff"/><rect x="6.8" y=".8" width="3.2" height="1.8" fill="#0a1a2a"/></svg>
<svg class="plot" style="left:1246px;top:6px" width="17" height="16" viewBox="0 0 17 16"><circle cx="6.5" cy="6" r="5.4" fill="#8f8f8f" stroke="#dcdcdc" stroke-width="1.3"/><circle cx="6" cy="5.4" r="2.6" fill="#5b4a44"/><circle cx="5.3" cy="4.6" r="1" fill="#d4d4d4"/><path d="M9 14.5L15 8.5" stroke="#a9c2ee" stroke-width="2.2"/><path d="M9.5 14.5L15 9" stroke="#4464c0" stroke-width=".7" stroke-dasharray="1 1"/></svg>
<svg class="plot" style="left:1264px;top:6px" width="16" height="16" viewBox="0 0 16 16"><path d="M3.5 9.5L10.5 7L14.5 11L7.5 14.5Z" fill="#9b9b9b" stroke="#e6e6e6" stroke-width=".8"/><path d="M5.5 10L10 8.4L12.4 10.8L8 12.8Z" fill="#5468a8"/><path d="M1.5 3.5L6 .8V2.6Q10.5 2.4 9.4 8L7.3 7.6Q8 4.8 6 4.9V6.6Z" fill="#30c030" stroke="#0e7a12" stroke-width=".6"/></svg>
<svg class="plot" style="left:1282px;top:6px" width="16" height="16" viewBox="0 0 16 16"><ellipse cx="8" cy="8" rx="7.7" ry="7.7" fill="#f2f2f2"/><ellipse cx="8" cy="8.4" rx="7.4" ry="7" fill="none" stroke="#c8c8d0" stroke-width=".8"/><text x="8" y="10.6" font-family="Liberation Sans,sans-serif" font-size="7.5" font-weight="bold" font-style="italic" text-anchor="middle" fill="#151528" textLength="12.5" lengthAdjust="spacingAndGlyphs">ESI</text></svg>
<svg class="plot" style="left:1300px;top:6px" width="16" height="16" viewBox="0 0 16 16"><ellipse cx="8" cy="8" rx="7.7" ry="7.7" fill="#f2f2f2"/><ellipse cx="8" cy="8.4" rx="7.4" ry="7" fill="none" stroke="#c8c8d0" stroke-width=".8"/><text x="8" y="10.6" font-family="Liberation Sans,sans-serif" font-size="7.5" font-weight="bold" font-style="italic" text-anchor="middle" fill="#151528" textLength="12.5" lengthAdjust="spacingAndGlyphs">ESI</text></svg>
<div class="n" style="left:1326px;top:9px;color:#fff;font-size:11px;letter-spacing:.6px">9:55</div>
</div>

</body></html>
